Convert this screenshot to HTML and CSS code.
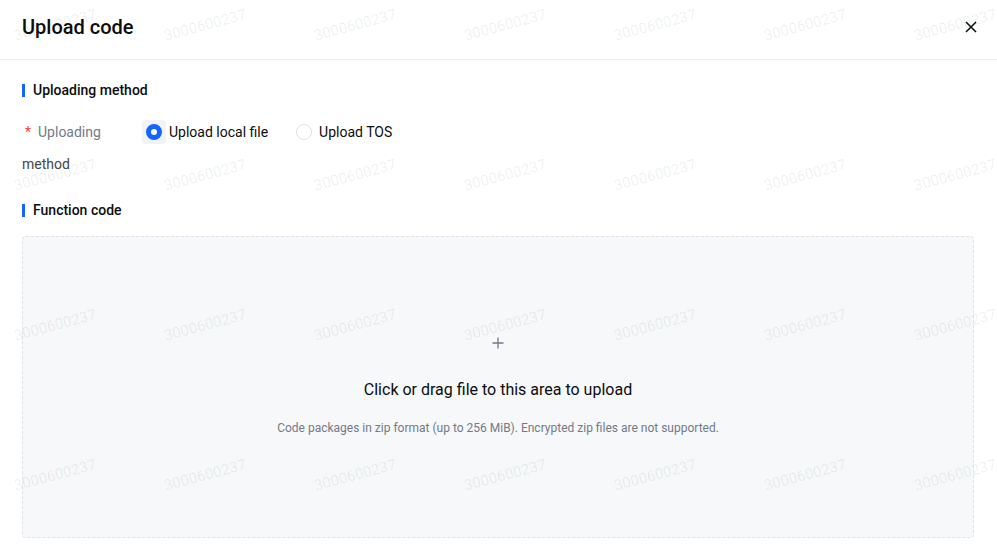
FILE: index.html
```html
<!DOCTYPE html>
<html lang="en">
<head>
<meta charset="utf-8">
<title>Upload code</title>
<link rel="stylesheet" href="styles.css">
</head>
<body>
<div class="drawer">
  <header class="header">
    <h1 class="title">Upload code</h1>
    <button class="close" aria-label="Close">
      <svg width="12" height="12" viewBox="0 0 12 12"><path d="M1.5 1.5L10.5 10.5M10.5 1.5L1.5 10.5" stroke="#0c0d0e" stroke-width="1.5" stroke-linecap="square"/></svg>
    </button>
  </header>
  <main class="content">
    <h2 class="section-title">Uploading method</h2>
    <div class="form-row">
      <label class="form-label"><span class="req">*</span><span class="label-a">Uploading</span> <span class="label-b">method</span></label>
      <div class="radio-group">
        <label class="radio checked"><span class="radio-box"><span class="radio-circle"></span></span><span class="radio-text">Upload local file</span></label>
        <label class="radio"><span class="radio-box"><span class="radio-circle"></span></span><span class="radio-text">Upload TOS</span></label>
      </div>
    </div>
    <h2 class="section-title">Function code</h2>
    <div class="dropzone">
      <svg class="plus" width="12" height="12" viewBox="0 0 12 12"><path d="M6 0.5V11.5M0.5 6H11.5" stroke="#737a87" stroke-width="1.3"/></svg>
      <div class="drop-main">Click or drag file to this area to upload</div>
      <div class="drop-sub">Code packages in zip format (up to 256 MiB). Encrypted zip files are not supported.</div>
    </div>
  </main>
  <div class="watermark" aria-hidden="true">
    <span>3000600237</span><span>3000600237</span><span>3000600237</span><span>3000600237</span><span>3000600237</span><span>3000600237</span><span>3000600237</span>
    <span>3000600237</span><span>3000600237</span><span>3000600237</span><span>3000600237</span><span>3000600237</span><span>3000600237</span><span>3000600237</span>
    <span>3000600237</span><span>3000600237</span><span>3000600237</span><span>3000600237</span><span>3000600237</span><span>3000600237</span><span>3000600237</span>
    <span>3000600237</span><span>3000600237</span><span>3000600237</span><span>3000600237</span><span>3000600237</span><span>3000600237</span><span>3000600237</span>
  </div>
</div>
</body>
</html>
```
FILE: styles.css
```css
* { box-sizing: border-box; }
html, body { margin: 0; padding: 0; background: #fff; }
body {
  font-family: Roboto, "Liberation Sans", Arial, sans-serif;
  color: #0c0d0e;
  width: 997px;
  height: 549px;
  overflow: hidden;
}
.drawer { position: relative; width: 997px; height: 549px; overflow: hidden; }
.header {
  height: 60px;
  padding: 0 20px 0 22px;
  display: flex;
  align-items: center;
  justify-content: space-between;
  border-bottom: 1px solid #eaedf1;
}
.title { margin: 0; font-size: 20px; font-weight: 500; line-height: 28px; color: #0c0d0e; position: relative; top: -3px; }
.close {
  border: 0; background: none; padding: 0; width: 12px; height: 12px;
  display: flex; align-items: center; justify-content: center; position: relative; top: -3px; cursor: pointer;
}
.content { padding: 20px 23px 0 22px; }
.section-title {
  margin: 0;
  font-size: 14px;
  font-weight: 500;
  line-height: 20px;
  color: #0c0d0e;
  height: 20px;
  display: flex;
  align-items: center;
  position: relative;
  padding-left: 11px;
}
.section-title::before {
  content: ""; position: absolute; left: 0; top: 4px; width: 3px; height: 13px; background: #1664ff;
}
.form-row { display: flex; margin: 16px 0 20px; }
.form-label {
  width: 108px;
  margin-right: 12px;
  font-size: 14px;
  line-height: 32px;
  color: #42464e;
}
.req { color: #f53f3f; margin-left: 3px; margin-right: 7px; }
.label-a { color: #737a87; }
.label-b { color: #42464e; }
.radio-group { display: flex; align-items: center; height: 32px; gap: 24px; }
.radio { display: flex; align-items: center; font-size: 14px; color: #0c0d0e; line-height: 22px; }
.radio-box {
  width: 24px; height: 24px; border-radius: 4px;
  display: flex; align-items: center; justify-content: center;
  margin-right: 3px;
}
.radio.checked .radio-box { background: #f1f3f6; }
.radio-circle {
  width: 16px; height: 16px; border-radius: 50%;
  border: 1px solid #dde2e9; background: #fff;
}
.radio.checked .radio-circle { border: 5px solid #1664ff; }
.dropzone {
  margin-top: 16px;
  height: 302px;
  border: 1px dashed #dde2e9;
  border-radius: 4px;
  background: #f6f8fa;
  display: flex;
  flex-direction: column;
  align-items: center;
  justify-content: center;
}
.plus { display: block; margin-bottom: 29px; }
.drop-main { font-size: 16px; line-height: 24px; color: #0c0d0e; margin-bottom: 16px; }
.drop-sub { font-size: 12px; line-height: 20px; color: #737a87; }
.watermark {
  position: absolute;
  left: -20px;
  top: -50px;
  display: grid;
  grid-template-columns: repeat(7, 150px);
  grid-auto-rows: 150px;
  place-items: center;
  pointer-events: none;
}
.watermark span {
  font-size: 15px;
  color: rgba(0, 0, 0, 0.07);
  transform: rotate(-15deg);
  white-space: nowrap;
}
```
